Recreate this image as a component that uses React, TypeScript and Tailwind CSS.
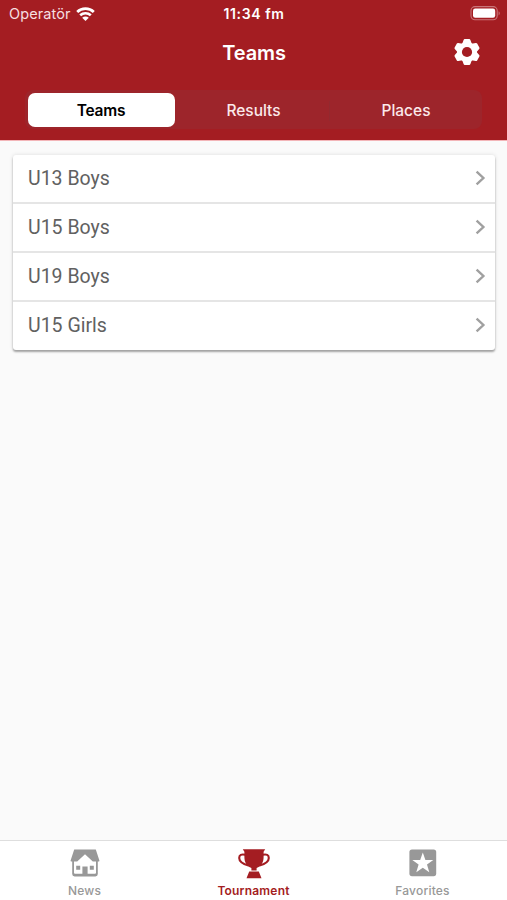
import { useState } from "react";
import clsx from "clsx";

const segments = ["Teams", "Results", "Places"];
const groups = ["U13 Boys", "U15 Boys", "U19 Boys", "U15 Girls"];

function WifiIcon() {
  return (
    <svg width="19" height="14" viewBox="0 0 19 14" fill="none">
      <path d="M1.2 4.9C5.8.5 13.2.5 17.8 4.9" stroke="#fff" strokeWidth="2.8" />
      <path d="M4.2 8.3c3-2.8 7.6-2.8 10.6 0" stroke="#fff" strokeWidth="2.6" />
      <path d="M9.5 14 6.2 10.7c1.8-1.7 4.8-1.7 6.6 0z" fill="#fff" />
    </svg>
  );
}

function BatteryIcon() {
  return (
    <svg width="31" height="15" viewBox="0 0 31 15" fill="none">
      <rect x="1" y="0.6" width="26.2" height="13.1" rx="4" stroke="#c97579" strokeWidth="1.1" />
      <rect x="3" y="2.6" width="22.2" height="9.1" rx="2.2" fill="#fff" />
      <path d="M28.6 5.2c1.5.6 1.5 3.6 0 4.2z" fill="#c97579" />
    </svg>
  );
}

function GearIcon() {
  return (
    <svg width="28" height="28" viewBox="-14 -14 28 28">
      <g fill="#fff">
        <circle r="10" />
        <path id="tooth" d="M-4.9 -8 -3.4 -12.1Q-3.1 -13 -2.2 -13H2.2Q3.1 -13 3.4 -12.1L4.9 -8V8L3.4 12.1Q3.1 13 2.2 13H-2.2Q-3.1 13 -3.4 12.1L-4.9 8z" />
        <use href="#tooth" transform="rotate(60)" />
        <use href="#tooth" transform="rotate(120)" />
      </g>
      <circle r="5.1" fill="#a41d22" />
    </svg>
  );
}

function HouseIcon() {
  return (
    <svg width="30" height="28" viewBox="0 0 30 28">
      <path
        fill="currentColor"
        d="M4.2 0.4h21.6L29.4 11.6q.2 1-.7 1h-.9V25q0 2.4-2.4 2.4H4.6Q2.2 27.4 2.2 25V12.6H1.3q-.9 0-.7-1z"
      />
      <path fill="#fff" d="M15 5.2 22.8 12.6H26v11.2q0 1-1 1H17.6V17.4h-5.2v7.4H5q-1 0-1-1V12.6h3.2z" />
      <path fill="currentColor" d="M6.2 16.8h4v4h-4zM19.8 16.8h4v4h-4z" />
    </svg>
  );
}

function TrophyIcon() {
  return (
    <svg width="32" height="30" viewBox="0 0 32 30">
      <path
        fill="none"
        stroke="currentColor"
        strokeWidth="2.1"
        d="M7.5 5.8Q1.2 4.4 1.2 8.9C1.2 13.2 5.6 15 10.5 16.4M24.5 5.8Q30.8 4.4 30.8 8.9C30.8 13.2 26.4 15 21.5 16.4"
      />
      <path
        fill="currentColor"
        d="M4.8 0.2h22.4L25.6 2.8V8C25.6 13.6 23 17.6 18.6 19V21.4h-5.2V19C9 17.6 6.4 13.6 6.4 8V2.8z"
      />
      <path fill="currentColor" d="M11.2 22.6h9.6l2.7 6.6H8.5z" />
    </svg>
  );
}

function StarBoxIcon() {
  return (
    <svg width="28" height="28" viewBox="0 0 28 28">
      <rect x="0.4" y="0.4" width="26.8" height="26.8" rx="2.6" fill="currentColor" />
      <path
        fill="#fff"
        d="M13.8 3.4 16.4 10.9h7.9l-6.3 4.7 2.3 7.6-6.5-4.5-6.5 4.5 2.3-7.6L3.3 10.9h7.9z"
      />
    </svg>
  );
}

const tabs = [
  { label: "News", icon: <HouseIcon /> },
  { label: "Tournament", icon: <TrophyIcon /> },
  { label: "Favorites", icon: <StarBoxIcon /> },
];

function App() {
  const [segment, setSegment] = useState("Teams");
  const [tab, setTab] = useState("Tournament");

  return (
    <div className="flex h-screen flex-col bg-[#fafafa] font-['Inter',sans-serif]">
      <header className="h-[141px] shrink-0 border-b border-[#f3b5b8] bg-[#a41d22] text-white">
        <div className="grid h-[27px] grid-cols-3 items-center pr-[6px] pl-[9px]">
          <div className="flex items-center gap-[5px] text-[#f6dfe0]">
            <span className="text-[14.5px] tracking-[0.1px]">Operatör</span>
            <WifiIcon />
          </div>
          <span className="pr-[2px] text-center text-[14px] font-semibold tracking-[0.6px]">
            11:34 fm
          </span>
          <div className="flex justify-end">
            <BatteryIcon />
          </div>
        </div>

        <div className="grid h-[50px] grid-cols-[1fr_auto_1fr] items-center pr-[26px] pl-[27px]">
          <h1 className="col-start-2 pt-px text-[20px] font-semibold tracking-[-0.1px]">Teams</h1>
          <button className="justify-self-end">
            <GearIcon />
          </button>
        </div>

        <div className="mx-[25px] mt-[13px] grid h-[39px] grid-cols-[149px_153px_1fr] rounded-lg bg-[#9d252b] p-[3px]">
          {segments.map((name, i) => (
            <button
              key={name}
              className={clsx(
                "my-[-0.5px] flex items-center justify-center pt-[2px] text-[15.5px]",
                name === segment
                  ? "mr-[2px] rounded-[7px] bg-white pr-px font-semibold tracking-[-0.2px] text-black"
                  : "font-medium text-[#fbe9ea]",
                i === 1 && "relative after:absolute after:top-2 after:right-0 after:h-5 after:w-px after:bg-[#93292f]",
                i === 2 && "pl-[3px]"
              )}
              onClick={() => setSegment(name)}
            >
              {name}
            </button>
          ))}
        </div>
      </header>

      <main className="flex-1 pt-[14px] pr-3 pl-[13px]">
        <ul className="rounded-[3px] bg-white shadow-[0_2px_2px_rgba(0,0,0,0.32),0_0_4px_rgba(0,0,0,0.12)]">
          {groups.map((name) => (
            <li
              key={name}
              className="flex h-[49px] items-center justify-between border-b-2 border-[#e5e5e5] pr-[9px] pb-px pl-[15px] font-['Roboto',sans-serif] text-[19.5px] text-[#616161] last:h-12 last:border-b-0 last:pb-[2px]"
            >
              <span className="pt-[2px]">{name}</span>
              <svg width="11" height="16" viewBox="0 0 11 16" fill="none">
                <path d="M1.6 1.6 8.4 8 1.6 14.4" stroke="#a0a0a0" strokeWidth="2.4" />
              </svg>
            </li>
          ))}
        </ul>
      </main>

      <nav className="grid h-[60px] shrink-0 grid-cols-3 border-t border-[#dedede] bg-white">
        {tabs.map(({ label, icon }) => (
          <button
            key={label}
            className={clsx(
              "flex flex-col items-center pt-2",
              label === tab ? "font-semibold text-[#a41d22]" : "font-medium text-[#989898]"
            )}
            onClick={() => setTab(label)}
          >
            <span className="flex h-[30px] items-start">{icon}</span>
            <span className="mt-1 text-[12px] leading-4 tracking-[0.2px]">{label}</span>
          </button>
        ))}
      </nav>
    </div>
  );
}

export default App;
